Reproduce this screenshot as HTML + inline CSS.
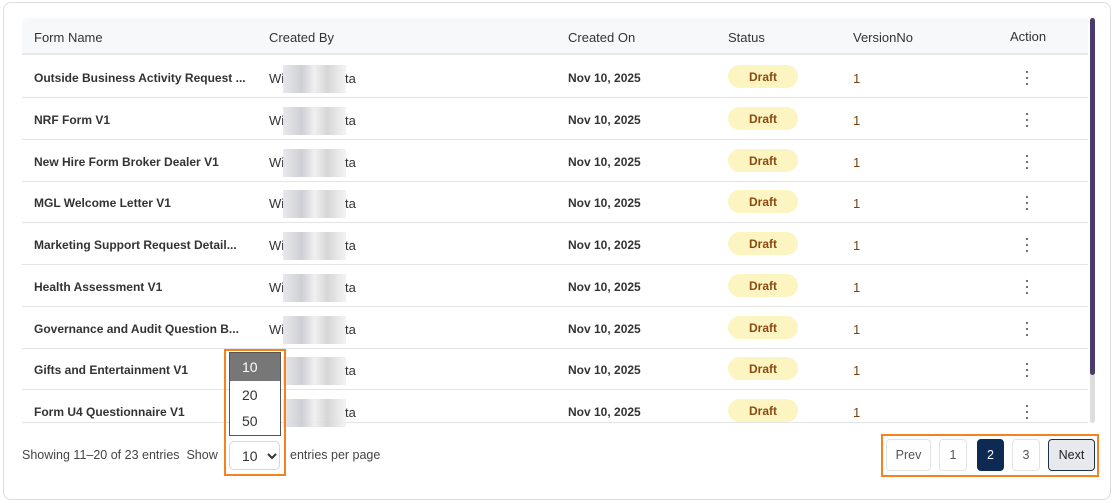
<!DOCTYPE html>
<html><head><style>
*{box-sizing:border-box;margin:0;padding:0}
body{width:1114px;height:503px;background:#fff;font-family:"Liberation Sans",sans-serif;position:relative;overflow:hidden;color:#2d2d2d}
.card{position:absolute;left:3px;top:2px;width:1108px;height:498px;border:1px solid #dcdce0;border-radius:8px;background:#fff}
.hdr{position:absolute;left:22px;top:18px;width:1066px;height:37px;background:#f7f8fa;border-bottom:2px solid #e6e7ea;border-radius:6px 0 0 0}
.hdr span{position:absolute;top:12px;font-size:13px;color:#333}
.row{position:absolute;left:22px;width:1066px;height:42px;border-bottom:1px solid #e4e4e6}
.row span{position:absolute;top:15px;font-size:12px;font-weight:bold;color:#333}
.pill{position:absolute;left:706px;top:9px;width:70px;height:23px;border-radius:12px;background:#fcf5c2;color:#8b4a12;font-size:12px;font-weight:bold;text-align:center;line-height:24px}
.ver{left:831px!important;color:#7a4010!important;font-weight:normal!important;font-size:13px!important}
.nm{font-weight:normal!important;font-size:13px!important}
.blur{position:absolute;left:261px;top:9px;width:63px;height:28px;background:linear-gradient(90deg,#e6e6ea,#c9cad0 30%,#eeeeef 50%,#d2d2d4 70%,#f2f2f2);opacity:.9}
.keb{position:absolute;left:1004px;top:15px;width:4px}
.keb i{display:block;width:2px;height:2px;background:#3a4460;margin:0 0 4px 0;border-radius:1px}
.sb{position:absolute;left:1090px;top:18px;width:5px;height:405px;background:#ddd;border-radius:3px}
.sb div{width:5px;height:357px;background:#4b3b6b;border-radius:3px}
.foot{position:absolute;top:448px;font-size:12.5px;color:#444}
.btn{position:absolute;top:439px;height:32px;border:1px solid #e2e3e6;border-radius:4px;font-size:12.5px;text-align:center;line-height:30px;color:#555;background:#fff}
</style></head><body>
<div class="card"></div>
<div class="hdr">
<span style="left:12px">Form Name</span><span style="left:247px">Created By</span><span style="left:546px">Created On</span><span style="left:706px">Status</span><span style="left:831px">VersionNo</span><span style="left:988px;top:11px">Action</span>
</div>
<div class="sb"><div></div></div>

<div class="row" style="top:56px"><span style="left:12px">Outside Business Activity Request ...</span><span class="nm" style="left:247px">Wi</span><div class="blur"></div><span class="nm" style="left:323px">ta</span><span style="left:546px">Nov 10, 2025</span><div class="pill">Draft</div><span class="ver">1</span><div class="keb"><i></i><i></i><i></i></div></div>
<div class="row" style="top:98px"><span style="left:12px">NRF Form V1</span><span class="nm" style="left:247px">Wi</span><div class="blur"></div><span class="nm" style="left:323px">ta</span><span style="left:546px">Nov 10, 2025</span><div class="pill">Draft</div><span class="ver">1</span><div class="keb"><i></i><i></i><i></i></div></div>
<div class="row" style="top:140px"><span style="left:12px">New Hire Form Broker Dealer V1</span><span class="nm" style="left:247px">Wi</span><div class="blur"></div><span class="nm" style="left:323px">ta</span><span style="left:546px">Nov 10, 2025</span><div class="pill">Draft</div><span class="ver">1</span><div class="keb"><i></i><i></i><i></i></div></div>
<div class="row" style="top:181px"><span style="left:12px">MGL Welcome Letter V1</span><span class="nm" style="left:247px">Wi</span><div class="blur"></div><span class="nm" style="left:323px">ta</span><span style="left:546px">Nov 10, 2025</span><div class="pill">Draft</div><span class="ver">1</span><div class="keb"><i></i><i></i><i></i></div></div>
<div class="row" style="top:223px"><span style="left:12px">Marketing Support Request Detail...</span><span class="nm" style="left:247px">Wi</span><div class="blur"></div><span class="nm" style="left:323px">ta</span><span style="left:546px">Nov 10, 2025</span><div class="pill">Draft</div><span class="ver">1</span><div class="keb"><i></i><i></i><i></i></div></div>
<div class="row" style="top:265px"><span style="left:12px">Health Assessment V1</span><span class="nm" style="left:247px">Wi</span><div class="blur"></div><span class="nm" style="left:323px">ta</span><span style="left:546px">Nov 10, 2025</span><div class="pill">Draft</div><span class="ver">1</span><div class="keb"><i></i><i></i><i></i></div></div>
<div class="row" style="top:307px"><span style="left:12px">Governance and Audit Question B...</span><span class="nm" style="left:247px">Wi</span><div class="blur"></div><span class="nm" style="left:323px">ta</span><span style="left:546px">Nov 10, 2025</span><div class="pill">Draft</div><span class="ver">1</span><div class="keb"><i></i><i></i><i></i></div></div>
<div class="row" style="top:348px"><span style="left:12px">Gifts and Entertainment V1</span><div class="blur"></div><span class="nm" style="left:323px">ta</span><span style="left:546px">Nov 10, 2025</span><div class="pill">Draft</div><span class="ver">1</span><div class="keb"><i></i><i></i><i></i></div></div>
<div class="row" style="top:390px;height:33px"><span style="left:12px">Form U4 Questionnaire V1</span><div class="blur"></div><span class="nm" style="left:323px">ta</span><span style="left:546px">Nov 10, 2025</span><div class="pill">Draft</div><span class="ver">1</span><div class="keb"><i></i><i></i><i></i></div></div>

<div class="foot" style="left:22px">Showing 11–20 of 23 entries&nbsp; Show</div>
<div style="position:absolute;left:229px;top:441px;width:51px;height:29px;border:1px solid #d5d6da;border-radius:5px;background:#fff;font-size:14px;color:#333;padding:6px 0 0 12px">10 <svg style="position:absolute;left:37px;top:11px" width="10" height="7" viewBox="0 0 10 7"><path d="M1 1l4 4 4-4" stroke="#333" stroke-width="2" fill="none"/></svg></div>
<div class="foot" style="left:290px">entries per page</div>
<div style="position:absolute;left:229px;top:352px;width:52px;height:84px;border:1px solid #555;background:#fff;font-size:14px;color:#333">
<div style="height:28px;background:#777;color:#fff;padding:6px 0 0 12px">10</div>
<div style="height:27px;padding:6px 0 0 12px">20</div>
<div style="height:27px;padding:5px 0 0 12px">50</div>
</div>
<div style="position:absolute;left:224px;top:349px;width:62px;height:127px;border:2px solid #f58220"></div>

<div style="position:absolute;left:881px;top:434px;width:218px;height:43px;border:2px solid #f58220"></div>
<div class="btn" style="left:886px;width:45px">Prev</div>
<div class="btn" style="left:939px;width:28px">1</div>
<div class="btn" style="left:977px;width:27px;background:#0d2b52;border-color:#0d2b52;color:#fff">2</div>
<div class="btn" style="left:1012px;width:28px">3</div>
<div class="btn" style="left:1048px;width:47px;background:#e8e9ec;border-color:#1d3050;color:#222">Next</div>
</body></html>
